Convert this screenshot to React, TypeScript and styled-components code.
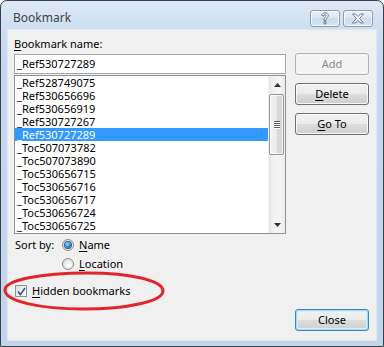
import React from "react";
import styled, { createGlobalStyle } from "styled-components";

const Global = createGlobalStyle`
  html, body { margin: 0; padding: 0; background: #ffffff; }
  body { font-family: "Noto Sans", "Liberation Sans", sans-serif; }
`;

const Window = styled.div`
  position: relative;
  width: 384px;
  height: 347px;
  box-sizing: border-box;
  border: 1px solid #3b4048;
  border-radius: 7px 7px 0 0;
  background: linear-gradient(#dde9f6 0px, #cddff1 28px, #c4d7ec 60px, #c1d4ea 100%);
  display: flex;
  flex-direction: column;
  overflow: hidden;
  font-family: "Noto Sans", "Liberation Sans", sans-serif;
  font-size: 11px;
  color: #000;
`;

const TitleBar = styled.div`
  height: 29px;
  flex: none;
  display: flex;
  align-items: flex-start;
  padding: 0 10px 0 12px;
`;

const Title = styled.div`
  flex: 1;
  font-size: 12px;
  line-height: 16px;
  padding-top: 9px;
  color: #444444;
`;

const CaptionButtons = styled.div`
  display: flex;
  gap: 3px;
  padding-top: 9px;
`;

const CaptionButton = styled.div`
  width: 30px;
  height: 17px;
  box-sizing: border-box;
  border: 1px solid #8d9cb0;
  border-radius: 3px;
  background: linear-gradient(#e9f1fa, #d8e5f3 50%, #cbdcee 50%, #d6e4f3);
  box-shadow: inset 0 0 0 1px rgba(255, 255, 255, 0.7);
  display: flex;
  align-items: center;
  justify-content: center;
`;

const Client = styled.div`
  flex: 1;
  margin: 0 7px 6px 7px;
  background: #f0f0f0;
  box-shadow: 0 0 0 1px #dfe8f2;
  display: grid;
  grid-template-columns: 272px 74px;
  column-gap: 9px;
  padding: 7px 7px 9px 6px;
  box-sizing: border-box;
`;

const LeftColumn = styled.div`
  display: flex;
  flex-direction: column;
`;

const RightColumn = styled.div`
  display: flex;
  flex-direction: column;
  gap: 8px;
  padding-top: 16px;
`;

const Label = styled.div`
  line-height: 14px;
  height: 14px;
  margin-bottom: 3px;
`;

const Key = styled.span`
  text-decoration: underline;
  text-underline-offset: 2px;
`;

const TextBox = styled.div`
  height: 20px;
  box-sizing: border-box;
  border: 1px solid #a3a6ab;
  background: #fff;
  padding: 0 2px;
  line-height: 18px;
  margin-bottom: 1px;
`;

const ListBox = styled.div`
  height: 159px;
  box-sizing: border-box;
  border: 1px solid #8e9196;
  background: #fff;
  display: flex;
  overflow: hidden;
`;

const Rows = styled.div`
  flex: 1;
  overflow: hidden;
`;

const Row = styled.div<{ $selected?: boolean }>`
  height: 13px;
  line-height: 13px;
  padding-left: 2px;
  white-space: nowrap;
  background: ${(p) => (p.$selected ? "#3399ff" : "transparent")};
  color: ${(p) => (p.$selected ? "#ffffff" : "#000000")};
`;

const ScrollBar = styled.div`
  width: 17px;
  flex: none;
  display: flex;
  flex-direction: column;
  background: linear-gradient(90deg, #e6e6e6, #f2f2f2 30%, #f4f4f4 70%, #ebebeb);
  border-left: 1px solid #f0f0f0;
  box-sizing: border-box;
`;

const ArrowButton = styled.div`
  height: 17px;
  flex: none;
  display: flex;
  align-items: center;
  justify-content: center;
`;

const Track = styled.div`
  flex: 1;
  padding: 1px 1px 0 0;
`;

const Thumb = styled.div`
  height: 61px;
  box-sizing: border-box;
  border: 1px solid #979797;
  border-radius: 2px;
  background: linear-gradient(90deg, #f3f3f3, #e9e9e9 50%, #d9d9d9 50%, #d4d4d4);
  box-shadow: inset 0 0 0 1px rgba(255, 255, 255, 0.75);
  display: flex;
  flex-direction: column;
  align-items: center;
  justify-content: center;
  gap: 1px;
`;

const Grip = styled.div`
  width: 6px;
  height: 1px;
  background: #5f5f5f;
  box-shadow: 0 1px 0 #ffffff;
`;

const SortGrid = styled.div`
  display: grid;
  grid-template-columns: 47px auto;
  row-gap: 3px;
  margin-top: 3px;
  padding-left: 1px;
`;

const SortLabel = styled.div`
  line-height: 16px;
  grid-row: 1;
  grid-column: 1;
`;

const OptionRow = styled.label<{ $row: number }>`
  grid-column: 2;
  grid-row: ${(p) => p.$row};
  display: flex;
  align-items: center;
  gap: 5px;
  height: 16px;
  line-height: 16px;
`;

const Radio = styled.span<{ $checked?: boolean }>`
  width: 12px;
  height: 12px;
  box-sizing: border-box;
  border-radius: 50%;
  border: 1px solid #8b8c8d;
  background: radial-gradient(circle at 60% 60%, #ffffff, #e1e1e1 70%, #d2d2d2);
  display: flex;
  align-items: center;
  justify-content: center;
  &::after {
    content: "";
    display: ${(p) => (p.$checked ? "block" : "none")};
    width: 6px;
    height: 6px;
    border-radius: 50%;
    background: radial-gradient(circle at 40% 35%, #a9dcf7, #2f82c2 55%, #1c4f8f);
    box-shadow: 0 0 0 1px #2a5d96;
  }
`;

const CheckRow = styled.label`
  display: flex;
  align-items: center;
  gap: 5px;
  height: 16px;
  line-height: 16px;
  margin-top: 11px;
  padding-left: 1px;
`;

const CheckBox = styled.span`
  width: 12px;
  height: 12px;
  box-sizing: border-box;
  border: 1px solid #8e8f8f;
  background: linear-gradient(135deg, #dcdcdc, #f6f6f6 60%, #ffffff);
  display: flex;
  align-items: center;
  justify-content: center;
`;

const Button = styled.div<{ $disabled?: boolean; $default?: boolean }>`
  height: 22px;
  box-sizing: border-box;
  border: 1px solid
    ${(p) => (p.$disabled ? "#adb2b5" : p.$default ? "#3d87b4" : "#707070")};
  border-radius: 3px;
  background: ${(p) =>
    p.$disabled
      ? "#f4f4f4"
      : "linear-gradient(#f2f2f2 0%, #ebebeb 50%, #dddddd 50%, #cfcfcf 100%)"};
  box-shadow: ${(p) =>
    p.$default
      ? "inset 0 0 0 1px #9fdcf5, inset 0 0 0 2px #d4f0fb"
      : p.$disabled
      ? "none"
      : "inset 0 0 0 1px rgba(255,255,255,0.8)"};
  color: ${(p) => (p.$disabled ? "#8a8a8a" : "#000")};
  display: flex;
  align-items: center;
  justify-content: center;
  line-height: 16px;
  flex: none;
`;

const CloseButton = styled(Button)`
  margin-top: auto;
`;

const Annotation = styled.svg`
  position: absolute;
  left: 0;
  top: 0;
  pointer-events: none;
`;

const names = [
  "_Ref528749075",
  "_Ref530656696",
  "_Ref530656919",
  "_Ref530727267",
  "_Ref530727289",
  "_Toc507073782",
  "_Toc507073890",
  "_Toc530656715",
  "_Toc530656716",
  "_Toc530656717",
  "_Toc530656724",
  "_Toc530656725",
];

export default function App() {
  return (
    <>
      <Global />
      <Window>
        <TitleBar>
          <Title>Bookmark</Title>
          <CaptionButtons>
            <CaptionButton>
              <svg width="10" height="13" viewBox="0 0 10 13">
                <path
                  d="M1.8 3.6 C1.8 1.5 3.3 0.9 5 0.9 C7 0.9 8.3 2 8.3 3.6 C8.3 5.3 6 5.8 6 7.6 L6 8.3 L4 8.3 L4 7.4 C4 5.2 6.2 4.9 6.2 3.7 C6.2 3 5.7 2.7 5 2.7 C4.2 2.7 3.8 3.1 3.8 3.9 Z M4 9.6 L6 9.6 L6 11.8 L4 11.8 Z"
                  fill="#ffffff"
                  stroke="#5e6d82"
                  strokeWidth="0.9"
                  strokeLinejoin="round"
                />
              </svg>
            </CaptionButton>
            <CaptionButton>
              <svg width="14" height="11" viewBox="0 0 14 11">
                <path
                  d="M1.5 1 L4.5 1 L7 3.6 L9.5 1 L12.5 1 L8.6 5.5 L12.5 10 L9.5 10 L7 7.4 L4.5 10 L1.5 10 L5.4 5.5 Z"
                  fill="#ffffff"
                  stroke="#5e6d82"
                  strokeWidth="0.9"
                  strokeLinejoin="round"
                />
              </svg>
            </CaptionButton>
          </CaptionButtons>
        </TitleBar>
        <Client>
          <LeftColumn>
            <Label>
              <Key>B</Key>ookmark name:
            </Label>
            <TextBox>_Ref530727289</TextBox>
            <ListBox>
              <Rows>
                {names.map((n) => (
                  <Row key={n} $selected={n === "_Ref530727289"}>
                    {n}
                  </Row>
                ))}
              </Rows>
              <ScrollBar>
                <ArrowButton>
                  <svg width="7" height="4" viewBox="0 0 7 4">
                    <path d="M0 4 L3.5 0 L7 4 Z" fill="#303030" />
                  </svg>
                </ArrowButton>
                <Track>
                  <Thumb>
                    <Grip />
                    <Grip />
                    <Grip />
                    <Grip />
                  </Thumb>
                </Track>
                <ArrowButton>
                  <svg width="7" height="4" viewBox="0 0 7 4">
                    <path d="M0 0 L7 0 L3.5 4 Z" fill="#303030" />
                  </svg>
                </ArrowButton>
              </ScrollBar>
            </ListBox>
            <SortGrid>
              <SortLabel>Sort by:</SortLabel>
              <OptionRow $row={1}>
                <Radio $checked />
                <span>
                  <Key>N</Key>ame
                </span>
              </OptionRow>
              <OptionRow $row={2}>
                <Radio />
                <span>
                  <Key>L</Key>ocation
                </span>
              </OptionRow>
            </SortGrid>
            <CheckRow>
              <CheckBox>
                <svg width="9" height="9" viewBox="0 0 9 9">
                  <path
                    d="M1 4.6 L3.4 7.6 L8 1"
                    fill="none"
                    stroke="#3f4f8f"
                    strokeWidth="1.6"
                  />
                </svg>
              </CheckBox>
              <span>
                <Key>H</Key>idden bookmarks
              </span>
            </CheckRow>
          </LeftColumn>
          <RightColumn>
            <Button $disabled>Add</Button>
            <Button>
              <span>
                <Key>D</Key>elete
              </span>
            </Button>
            <Button>
              <span>
                <Key>G</Key>o To
              </span>
            </Button>
            <CloseButton $default>Close</CloseButton>
          </RightColumn>
        </Client>
        <Annotation width="384" height="347" viewBox="0 0 384 347">
          <path
            d="M4 289 C4 279 40 272 86 272 C132 272 162 280 162 290 C162 300 128 308 82 308 C38 308 4 300 4 289 Z"
            fill="none"
            stroke="#e0262c"
            strokeWidth="3"
          />
        </Annotation>
      </Window>
    </>
  );
}
